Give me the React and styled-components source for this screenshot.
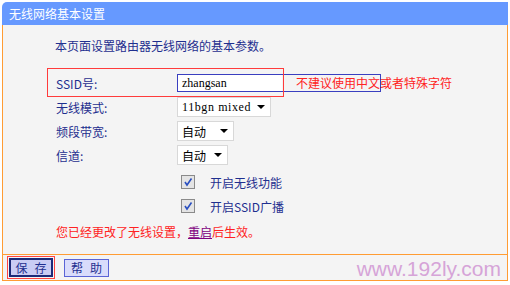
import React from 'react'
import styled, { createGlobalStyle } from 'styled-components'

const GlobalStyle = createGlobalStyle`
  html, body {
    margin: 0;
    padding: 0;
    background: #ffffff;
  }
  body {
    font-family: "Noto Sans CJK SC", "DejaVu Sans", sans-serif;
    font-size: 12px;
  }
`

const Frame = styled.div`
  width: 506px;
  margin: 2px 0 0 2px;
  display: flex;
  flex-direction: column;
`

const Header = styled.div`
  height: 23px;
  background: #6699ff;
  border-top-left-radius: 5px;
  color: #ffffff;
  font-size: 12px;
  line-height: 23px;
  padding-left: 7px;
`

const Content = styled.div`
  background: #f4f4f4;
  border-left: 1px solid #ff9c33;
  border-right: 1px solid #ff9c33;
  padding: 13px 0 10px 52px;
  display: flex;
  flex-direction: column;
`

const Intro = styled.div`
  color: #1f2f8f;
  height: 16px;
  line-height: 16px;
  margin-bottom: 17px;
`

const Row = styled.div`
  position: relative;
  display: grid;
  grid-template-columns: 122px 1fr;
  align-items: center;
  height: 24px;
`

const Label = styled.div`
  color: #1f2f8f;
  padding-left: 1px;
`

const Mark = styled.div`
  position: absolute;
  left: -8px;
  top: -3px;
  width: 235px;
  height: 27px;
  border: 1px solid #ff3b3b;
  pointer-events: none;
`

const TextBox = styled.div`
  position: relative;
  width: 198px;
  height: 16px;
  border: 1px solid #3a3fc0;
  background: linear-gradient(to right, #ffffff 104px, transparent 104px);
  font-family: "Liberation Serif", "DejaVu Serif", serif;
  font-size: 12px;
  line-height: 16px;
  padding-left: 4px;
  color: #000;
  box-sizing: content-box;
`

const Hint = styled.span`
  position: absolute;
  left: 118px;
  top: -1px;
  white-space: nowrap;
  color: #ff2222;
  font-family: "Noto Sans CJK SC", sans-serif;
  font-size: 12px;
  line-height: 18px;
`

const Select = styled.div`
  width: ${p => p.$w}px;
  height: 20px;
  box-sizing: border-box;
  border: 1px solid #d8d8d8;
  background: #ffffff;
  display: flex;
  align-items: center;
  justify-content: space-between;
  padding: 0 5px 0 4px;
  color: #000;
  font-family: ${p => p.$mono ? '"Liberation Serif", "DejaVu Serif", serif' : '"Noto Sans CJK SC", sans-serif'};
  font-size: 12px;
  letter-spacing: ${p => p.$mono ? '0.6px' : '0'};
`

const Arrow = styled.span`
  width: 0;
  height: 0;
  border-left: 4px solid transparent;
  border-right: 4px solid transparent;
  border-top: 4px solid #000;
`

const CheckRow = styled.div`
  display: flex;
  align-items: center;
  gap: 15px;
  padding-left: 4px;
  height: 24px;
  margin-top: ${p => p.$gap || 0}px;
  margin-left: 122px;
  color: #1f2f8f;
`

const Box = styled.span`
  width: 12px;
  height: 12px;
  border: 1px solid #8a8a8a;
  background: #e4e4e4;
  display: flex;
  align-items: center;
  justify-content: center;
`

const Notice = styled.div`
  color: #ff2222;
  height: 24px;
  line-height: 24px;
  margin-top: 2px;
  padding-left: 1px;
  a {
    color: #800080;
    text-decoration: underline;
  }
`

const Footer = styled.div`
  position: relative;
  height: 25px;
  border: 1px solid #ff9c33;
  background: #f4f4f4;
  display: flex;
  align-items: center;
  gap: 9px;
  padding-left: 4px;
`

const SaveMark = styled.div`
  border: 1px solid #ff4444;
  padding: 1px;
  display: flex;
`

const Button = styled.button`
  width: ${p => p.$primary ? 44 : 45}px;
  height: ${p => p.$primary ? 19 : 18}px;
  box-sizing: border-box;
  border: ${p => p.$primary ? '2px solid #1b2a78' : '1px solid #5a64d6'};
  background: ${p => p.$primary ? '#c9ccf4' : '#d9dcfb'};
  color: #1f2f8f;
  font-family: "Noto Sans CJK SC", sans-serif;
  font-size: 12px;
  line-height: 1;
  padding: 0;
  white-space: nowrap;
  display: flex;
  align-items: center;
  justify-content: center;
  gap: 7px;
`

const Watermark = styled.span`
  position: absolute;
  right: 6px;
  top: 2px;
  color: #d6a4d8;
  font-family: "Liberation Sans", Arial, sans-serif;
  font-size: 21px;
  line-height: 24px;
`

const Check = () => (
  <svg width="10" height="10" viewBox="0 0 10 10">
    <path d="M2 5 L4 8 L8.5 1.5" fill="none" stroke="#2a4fc0" strokeWidth="1.6" />
  </svg>
)

export default function App() {
  return (
    <>
      <GlobalStyle />
      <Frame>
        <Header>无线网络基本设置</Header>
        <Content>
          <Intro>本页面设置路由器无线网络的基本参数。</Intro>
          <Row>
            <Label>SSID号:</Label>
            <TextBox>
              zhangsan
              <Hint>不建议使用中文或者特殊字符</Hint>
            </TextBox>
            <Mark />
          </Row>
          <Row>
            <Label>无线模式:</Label>
            <Select $w={94} $mono>11bgn mixed<Arrow /></Select>
          </Row>
          <Row>
            <Label>频段带宽:</Label>
            <Select $w={57}>自动<Arrow /></Select>
          </Row>
          <Row>
            <Label>信道:</Label>
            <Select $w={51}>自动<Arrow /></Select>
          </Row>
          <CheckRow $gap={3}>
            <Box><Check /></Box>
            开启无线功能
          </CheckRow>
          <CheckRow>
            <Box><Check /></Box>
            开启SSID广播
          </CheckRow>
          <Notice>您已经更改了无线设置，<a>重启</a>后生效。</Notice>
        </Content>
        <Footer>
          <SaveMark>
            <Button $primary><span>保</span><span>存</span></Button>
          </SaveMark>
          <Button><span>帮</span><span>助</span></Button>
          <Watermark>www.192ly.com</Watermark>
        </Footer>
      </Frame>
    </>
  )
}
